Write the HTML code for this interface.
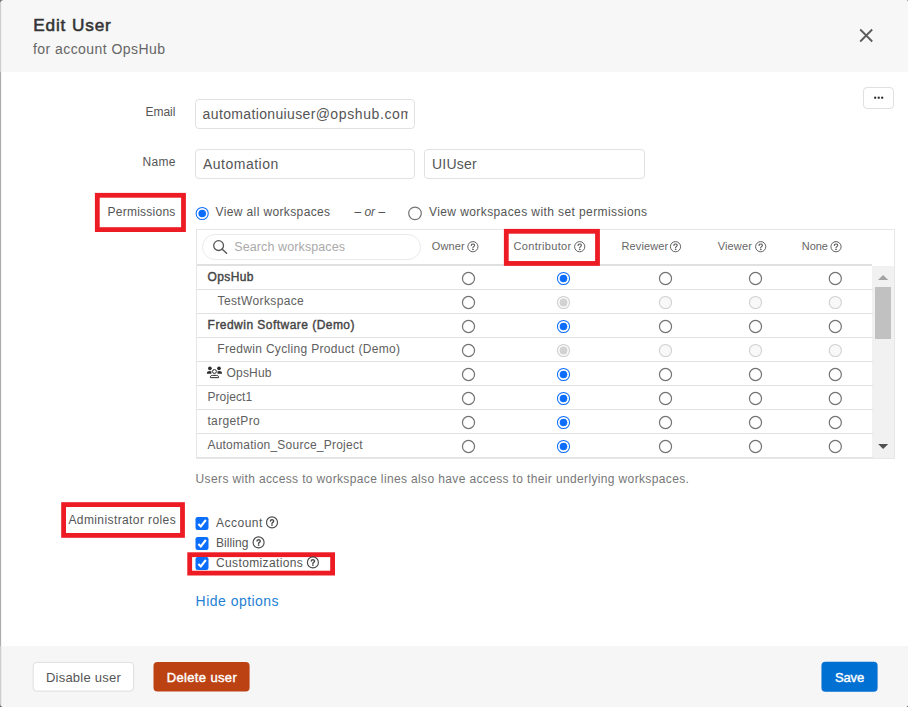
<!DOCTYPE html>
<html lang="en">
<head>
<meta charset="utf-8">
<title>Edit User</title>
<style>
html,body{margin:0;padding:0;}
body{width:908px;height:707px;overflow:hidden;background:#fff;position:relative;font-family:"Liberation Sans",sans-serif;}
.t{position:absolute;white-space:nowrap;line-height:1;}
.abs{position:absolute;box-sizing:border-box;}
#hdr{left:0;top:0;width:908px;height:72px;background:#f7f7f7;}
#ftr{left:0;top:645.5px;width:908px;height:61.5px;background:#f6f6f6;}
.inp{background:#fff;border:1px solid #e1e1e1;border-radius:4px;}
.btn{border-radius:4px;}
#tbl{left:196px;top:229px;width:698.5px;height:229.5px;border:1px solid #e7e7e7;background:#fff;}
.rl{left:197px;width:675.5px;height:1px;background:#e2e2e2;}
svg#ov{position:absolute;left:0;top:0;}
</style>
</head>
<body>
<div class="abs" id="hdr"></div>
<div class="abs" id="ftr"></div>
<div class="abs" style="left:0;top:3px;width:1px;height:69px;background:#cfcfcf;"></div>
<div class="abs" style="left:1px;top:3px;width:1px;height:69px;background:#f0f0f0;"></div>
<div class="abs" style="left:0;top:72px;width:1px;height:573.5px;background:#adadad;"></div>
<div class="abs" style="left:1px;top:72px;width:1px;height:573.5px;background:#f4f4f4;"></div>
<div class="abs" style="left:0;top:645.5px;width:1px;height:59px;background:#cdcdcd;"></div>
<div class="abs" style="left:1px;top:645.5px;width:1px;height:59px;background:#ebebeb;"></div>
<div class="abs inp" style="left:195px;top:99px;width:220px;height:29.5px;"></div>
<div class="abs inp" style="left:195px;top:149px;width:220px;height:29.5px;"></div>
<div class="abs inp" style="left:424px;top:149px;width:220.5px;height:29.5px;"></div>
<div class="abs" style="left:200px;top:104px;width:208.4px;height:20px;overflow:hidden;"><span class="t" id="vemail" style="left:2.6px;top:2.65px;font-size:14px;color:#555;letter-spacing:0.36px;">automationuiuser@<span style="letter-spacing:0.62px;">opshub.com</span></span></div>
<div class="abs inp" style="left:863px;top:87px;width:31px;height:21.5px;border-radius:4px;border-color:#e0e0e0;"></div>
<div class="abs" id="tbl"></div>
<div class="abs" style="left:872.3px;top:266px;width:21.7px;height:191.5px;background:#f1f1f1;"></div>
<div class="abs" style="left:874.8px;top:287px;width:16.6px;height:51.6px;background:#c1c1c1;"></div>
<div class="abs" style="left:197px;top:263.6px;width:675.3px;height:2px;background:#e0e0e0;"></div>
<div class="abs rl" style="top:289.0px;"></div>
<div class="abs rl" style="top:313.0px;"></div>
<div class="abs rl" style="top:337.0px;"></div>
<div class="abs rl" style="top:361.0px;"></div>
<div class="abs rl" style="top:385.0px;"></div>
<div class="abs rl" style="top:409.0px;"></div>
<div class="abs rl" style="top:433.0px;"></div>
<div class="abs rl" style="top:457.0px;"></div>
<div class="abs" style="left:201.5px;top:234px;width:219.5px;height:26px;border:1px solid #eaeaea;border-radius:13px;background:#fff;"></div>
<svg id="ov" width="908" height="707" viewBox="0 0 908 707">
<rect x="33.2" y="662.4" width="100.4" height="28.7" rx="3.6" fill="#fff" stroke="#dedede" stroke-width="1"/>
<rect x="153.5" y="661.9" width="96.1" height="29.7" rx="4" fill="#bd4213"/>
<rect x="821.45" y="661.8" width="56.15" height="30" rx="4" fill="#0070d2"/>
<path d="M0,0 L3.2,0 C1.4,0.6 0.6,1.6 0,3.4 Z" fill="#777"/>
<path d="M908,0 L906.6,0 C907.4,0.3 907.8,0.8 908,1.4 Z" fill="#777"/>
<path d="M0,707 L2.6,707 C1.3,706.4 0.5,705.6 0,704.2 Z" fill="#666"/>
<path d="M908,707 L908,705.6 C907.7,706.4 907.2,706.8 906.4,707 Z" fill="#555"/>
<path d="M860.2,29.5 L872.2,41.5 M872.2,29.5 L860.2,41.5" stroke="#5c5c5c" stroke-width="1.85" fill="none"/>
<rect x="874.2" y="96.7" width="2" height="2" fill="#222"/>
<rect x="877.7" y="96.7" width="2" height="2" fill="#222"/>
<rect x="881.2" y="96.7" width="2" height="2" fill="#222"/>
<rect x="97.30" y="195.30" width="86.20" height="34.30" fill="none" stroke="#ed1c24" stroke-width="4.8"/>
<rect x="506.30" y="231.30" width="91.20" height="32.15" fill="none" stroke="#ed1c24" stroke-width="4.8"/>
<rect x="63.60" y="504.60" width="118.90" height="30.80" fill="none" stroke="#ed1c24" stroke-width="4.8"/>
<rect x="189.70" y="554.70" width="142.90" height="18.40" fill="none" stroke="#ed1c24" stroke-width="4.8"/>
<circle cx="202.2" cy="213.5" r="6.05" fill="#fff" stroke="#0d6efd" stroke-width="1.05"/><circle cx="202.2" cy="213.5" r="3.8" fill="#0d6efd"/>
<circle cx="415.0" cy="213.35" r="6.3" fill="#fff" stroke="#747474" stroke-width="1.2"/>
<circle cx="218.6" cy="245.6" r="4.9" fill="none" stroke="#555" stroke-width="1.3"/><path d="M222.2,249.3 L226.6,253.2" stroke="#555" stroke-width="1.4" stroke-linecap="round"/>
<circle cx="472.90" cy="246.70" r="5.10" fill="none" stroke="#606060" stroke-width="1.0"/><g transform="translate(472.90,246.70) scale(0.938)" fill="none" stroke="#606060" stroke-width="1.23" stroke-linecap="round"><path d="M-1.7,-1.4 C-1.7,-3.4 1.8,-3.4 1.8,-1.4 C1.8,-0.1 0,-0.1 0,1.2"/><circle cx="0" cy="2.9" r="0.35" fill="#606060" stroke-width="0.98"/></g>
<circle cx="579.70" cy="246.70" r="5.10" fill="none" stroke="#606060" stroke-width="1.0"/><g transform="translate(579.70,246.70) scale(0.938)" fill="none" stroke="#606060" stroke-width="1.23" stroke-linecap="round"><path d="M-1.7,-1.4 C-1.7,-3.4 1.8,-3.4 1.8,-1.4 C1.8,-0.1 0,-0.1 0,1.2"/><circle cx="0" cy="2.9" r="0.35" fill="#606060" stroke-width="0.98"/></g>
<circle cx="675.50" cy="246.70" r="5.10" fill="none" stroke="#606060" stroke-width="1.0"/><g transform="translate(675.50,246.70) scale(0.938)" fill="none" stroke="#606060" stroke-width="1.23" stroke-linecap="round"><path d="M-1.7,-1.4 C-1.7,-3.4 1.8,-3.4 1.8,-1.4 C1.8,-0.1 0,-0.1 0,1.2"/><circle cx="0" cy="2.9" r="0.35" fill="#606060" stroke-width="0.98"/></g>
<circle cx="760.70" cy="246.70" r="5.10" fill="none" stroke="#606060" stroke-width="1.0"/><g transform="translate(760.70,246.70) scale(0.938)" fill="none" stroke="#606060" stroke-width="1.23" stroke-linecap="round"><path d="M-1.7,-1.4 C-1.7,-3.4 1.8,-3.4 1.8,-1.4 C1.8,-0.1 0,-0.1 0,1.2"/><circle cx="0" cy="2.9" r="0.35" fill="#606060" stroke-width="0.98"/></g>
<circle cx="836.00" cy="246.70" r="5.10" fill="none" stroke="#606060" stroke-width="1.0"/><g transform="translate(836.00,246.70) scale(0.938)" fill="none" stroke="#606060" stroke-width="1.23" stroke-linecap="round"><path d="M-1.7,-1.4 C-1.7,-3.4 1.8,-3.4 1.8,-1.4 C1.8,-0.1 0,-0.1 0,1.2"/><circle cx="0" cy="2.9" r="0.35" fill="#606060" stroke-width="0.98"/></g>
<circle cx="468.5" cy="278.5" r="6.05" fill="#fff" stroke="#747474" stroke-width="1.2"/>
<circle cx="563.5" cy="278.5" r="6.05" fill="#fff" stroke="#0d6efd" stroke-width="1.05"/><circle cx="563.5" cy="278.5" r="3.8" fill="#0d6efd"/>
<circle cx="665.5" cy="278.5" r="6.05" fill="#fff" stroke="#747474" stroke-width="1.2"/>
<circle cx="755.5" cy="278.5" r="6.05" fill="#fff" stroke="#747474" stroke-width="1.2"/>
<circle cx="835.3" cy="278.5" r="6.05" fill="#fff" stroke="#747474" stroke-width="1.2"/>
<circle cx="468.5" cy="302.5" r="6.05" fill="#fff" stroke="#747474" stroke-width="1.2"/>
<circle cx="563.5" cy="302.5" r="6.05" fill="#fafafa" stroke="#cecece" stroke-width="1.1"/><circle cx="563.5" cy="302.5" r="3.9" fill="#d2d2d2"/>
<circle cx="665.5" cy="302.5" r="6.05" fill="#f8f8f8" stroke="#d0d0d0" stroke-width="1.1"/>
<circle cx="755.5" cy="302.5" r="6.05" fill="#f8f8f8" stroke="#d0d0d0" stroke-width="1.1"/>
<circle cx="835.3" cy="302.5" r="6.05" fill="#f8f8f8" stroke="#d0d0d0" stroke-width="1.1"/>
<circle cx="468.5" cy="326.5" r="6.05" fill="#fff" stroke="#747474" stroke-width="1.2"/>
<circle cx="563.5" cy="326.5" r="6.05" fill="#fff" stroke="#0d6efd" stroke-width="1.05"/><circle cx="563.5" cy="326.5" r="3.8" fill="#0d6efd"/>
<circle cx="665.5" cy="326.5" r="6.05" fill="#fff" stroke="#747474" stroke-width="1.2"/>
<circle cx="755.5" cy="326.5" r="6.05" fill="#fff" stroke="#747474" stroke-width="1.2"/>
<circle cx="835.3" cy="326.5" r="6.05" fill="#fff" stroke="#747474" stroke-width="1.2"/>
<circle cx="468.5" cy="350.5" r="6.05" fill="#fff" stroke="#747474" stroke-width="1.2"/>
<circle cx="563.5" cy="350.5" r="6.05" fill="#fafafa" stroke="#cecece" stroke-width="1.1"/><circle cx="563.5" cy="350.5" r="3.9" fill="#d2d2d2"/>
<circle cx="665.5" cy="350.5" r="6.05" fill="#f8f8f8" stroke="#d0d0d0" stroke-width="1.1"/>
<circle cx="755.5" cy="350.5" r="6.05" fill="#f8f8f8" stroke="#d0d0d0" stroke-width="1.1"/>
<circle cx="835.3" cy="350.5" r="6.05" fill="#f8f8f8" stroke="#d0d0d0" stroke-width="1.1"/>
<circle cx="468.5" cy="374.5" r="6.05" fill="#fff" stroke="#747474" stroke-width="1.2"/>
<circle cx="563.5" cy="374.5" r="6.05" fill="#fff" stroke="#0d6efd" stroke-width="1.05"/><circle cx="563.5" cy="374.5" r="3.8" fill="#0d6efd"/>
<circle cx="665.5" cy="374.5" r="6.05" fill="#fff" stroke="#747474" stroke-width="1.2"/>
<circle cx="755.5" cy="374.5" r="6.05" fill="#fff" stroke="#747474" stroke-width="1.2"/>
<circle cx="835.3" cy="374.5" r="6.05" fill="#fff" stroke="#747474" stroke-width="1.2"/>
<circle cx="468.5" cy="398.5" r="6.05" fill="#fff" stroke="#747474" stroke-width="1.2"/>
<circle cx="563.5" cy="398.5" r="6.05" fill="#fff" stroke="#0d6efd" stroke-width="1.05"/><circle cx="563.5" cy="398.5" r="3.8" fill="#0d6efd"/>
<circle cx="665.5" cy="398.5" r="6.05" fill="#fff" stroke="#747474" stroke-width="1.2"/>
<circle cx="755.5" cy="398.5" r="6.05" fill="#fff" stroke="#747474" stroke-width="1.2"/>
<circle cx="835.3" cy="398.5" r="6.05" fill="#fff" stroke="#747474" stroke-width="1.2"/>
<circle cx="468.5" cy="422.5" r="6.05" fill="#fff" stroke="#747474" stroke-width="1.2"/>
<circle cx="563.5" cy="422.5" r="6.05" fill="#fff" stroke="#0d6efd" stroke-width="1.05"/><circle cx="563.5" cy="422.5" r="3.8" fill="#0d6efd"/>
<circle cx="665.5" cy="422.5" r="6.05" fill="#fff" stroke="#747474" stroke-width="1.2"/>
<circle cx="755.5" cy="422.5" r="6.05" fill="#fff" stroke="#747474" stroke-width="1.2"/>
<circle cx="835.3" cy="422.5" r="6.05" fill="#fff" stroke="#747474" stroke-width="1.2"/>
<circle cx="468.5" cy="446.5" r="6.05" fill="#fff" stroke="#747474" stroke-width="1.2"/>
<circle cx="563.5" cy="446.5" r="6.05" fill="#fff" stroke="#0d6efd" stroke-width="1.05"/><circle cx="563.5" cy="446.5" r="3.8" fill="#0d6efd"/>
<circle cx="665.5" cy="446.5" r="6.05" fill="#fff" stroke="#747474" stroke-width="1.2"/>
<circle cx="755.5" cy="446.5" r="6.05" fill="#fff" stroke="#747474" stroke-width="1.2"/>
<circle cx="835.3" cy="446.5" r="6.05" fill="#fff" stroke="#747474" stroke-width="1.2"/>
<path d="M878,280 L888.2,280 L883.1,274.9 Z" fill="#a3a3a3"/>
<path d="M878.1,443.9 L888.2,443.9 L883.15,449 Z" fill="#505050"/>
<g fill="#2d2d2d" stroke="none"><circle cx="209.9" cy="368.3" r="1.85"/><circle cx="219.0" cy="368.3" r="1.85"/><path d="M206.9,373.8 L206.9,373.1 C206.9,371.6 208.1,370.9 209.6,370.9 C210.4,370.9 211.1,371.2 211.5,371.6 C211.4,372.3 211.4,373.1 211.4,373.8 Z"/><path d="M222.0,373.8 L222.0,373.1 C222.0,371.6 220.8,370.9 219.3,370.9 C218.5,370.9 217.8,371.2 217.4,371.6 C217.5,372.3 217.5,373.1 217.5,373.8 Z"/></g><g fill="none" stroke="#2d2d2d" stroke-width="1.0" stroke-linejoin="round"><circle cx="214.45" cy="371.5" r="1.95"/><path d="M210.4,377.65 L210.4,377.0 C210.4,375.8 211.3,375.4 212.3,375.4 L216.6,375.4 C217.6,375.4 218.5,375.8 218.5,377.0 L218.5,377.65 Z"/></g>
<rect x="195.5" y="517" width="13" height="13" rx="2.2" fill="#0c6efd"/><path d="M198.40,523.90 L200.85,526.40 L205.85,520.00" fill="none" stroke="#fff" stroke-width="2.1" stroke-linecap="butt" stroke-linejoin="miter"/>
<rect x="195.5" y="537" width="13" height="13" rx="2.2" fill="#0c6efd"/><path d="M198.40,543.90 L200.85,546.40 L205.85,540.00" fill="none" stroke="#fff" stroke-width="2.1" stroke-linecap="butt" stroke-linejoin="miter"/>
<rect x="195.5" y="557" width="13" height="13" rx="2.2" fill="#0c6efd"/><path d="M198.40,563.90 L200.85,566.40 L205.85,560.00" fill="none" stroke="#fff" stroke-width="2.1" stroke-linecap="butt" stroke-linejoin="miter"/>
<circle cx="272.00" cy="522.40" r="5.50" fill="none" stroke="#4a4a4a" stroke-width="1.15"/><g transform="translate(272.00,522.40) scale(0.935)" fill="none" stroke="#4a4a4a" stroke-width="1.50" stroke-linecap="round"><path d="M-1.7,-1.4 C-1.7,-3.4 1.8,-3.4 1.8,-1.4 C1.8,-0.1 0,-0.1 0,1.2"/><circle cx="0" cy="2.9" r="0.35" fill="#4a4a4a" stroke-width="1.20"/></g>
<circle cx="258.60" cy="542.40" r="5.50" fill="none" stroke="#4a4a4a" stroke-width="1.15"/><g transform="translate(258.60,542.40) scale(0.935)" fill="none" stroke="#4a4a4a" stroke-width="1.50" stroke-linecap="round"><path d="M-1.7,-1.4 C-1.7,-3.4 1.8,-3.4 1.8,-1.4 C1.8,-0.1 0,-0.1 0,1.2"/><circle cx="0" cy="2.9" r="0.35" fill="#4a4a4a" stroke-width="1.20"/></g>
<circle cx="312.90" cy="562.40" r="5.50" fill="none" stroke="#4a4a4a" stroke-width="1.15"/><g transform="translate(312.90,562.40) scale(0.935)" fill="none" stroke="#4a4a4a" stroke-width="1.50" stroke-linecap="round"><path d="M-1.7,-1.4 C-1.7,-3.4 1.8,-3.4 1.8,-1.4 C1.8,-0.1 0,-0.1 0,1.2"/><circle cx="0" cy="2.9" r="0.35" fill="#4a4a4a" stroke-width="1.20"/></g>
</svg>
<span class="t" id="title" style="left:33.20px;top:17.14px;font-size:17.2px;color:#333;letter-spacing:0.864px;-webkit-text-stroke:0.55px #333;">Edit User</span>
<span class="t" id="sub" style="left:33.00px;top:41.75px;font-size:14px;color:#666;letter-spacing:0.440px;">for account OpsHub</span>
<span class="t" id="lemail" style="left:145.50px;top:106.34px;font-size:12px;color:#555;letter-spacing:-0.029px;">Email</span>
<span class="t" id="lname" style="left:142.40px;top:156.14px;font-size:12px;color:#555;letter-spacing:0.328px;">Name</span>
<span class="t" id="lperm" style="left:107.60px;top:206.04px;font-size:12px;color:#555;letter-spacing:0.234px;">Permissions</span>
<span class="t" id="ladmin" style="left:68.40px;top:513.54px;font-size:12px;color:#555;letter-spacing:0.404px;">Administrator roles</span>
<span class="t" id="vauto" style="left:203.00px;top:156.95px;font-size:14px;color:#555;letter-spacing:0.497px;">Automation</span>
<span class="t" id="vuser" style="left:432.00px;top:156.95px;font-size:14px;color:#555;letter-spacing:0.208px;">UIUser</span>
<span class="t" id="r1" style="left:215.60px;top:205.74px;font-size:12px;color:#555;letter-spacing:0.371px;">View all workspaces</span>
<span class="t" id="or" style="left:354.40px;top:205.74px;font-size:12px;color:#555;letter-spacing:0.003px;font-style:italic;">– or –</span>
<span class="t" id="r2" style="left:429.00px;top:205.74px;font-size:12px;color:#555;letter-spacing:0.407px;">View workspaces with set permissions</span>
<span class="t" id="ph" style="left:234.30px;top:240.62px;font-size:12.5px;color:#aaa;letter-spacing:0.101px;">Search workspaces</span>
<span class="t" id="hown" style="left:431.80px;top:241.19px;font-size:11px;color:#666;letter-spacing:0.098px;">Owner</span>
<span class="t" id="hcon" style="left:513.60px;top:241.19px;font-size:11px;color:#666;letter-spacing:0.308px;">Contributor</span>
<span class="t" id="hrev" style="left:621.40px;top:241.19px;font-size:11px;color:#666;letter-spacing:0.149px;">Reviewer</span>
<span class="t" id="hvie" style="left:717.70px;top:241.19px;font-size:11px;color:#666;letter-spacing:0.152px;">Viewer</span>
<span class="t" id="hnon" style="left:801.80px;top:241.19px;font-size:11px;color:#666;letter-spacing:-0.066px;">None</span>
<span class="t" id="w1" style="left:207.60px;top:270.84px;font-size:12px;color:#444;letter-spacing:0.374px;-webkit-text-stroke:0.4px #444;">OpsHub</span>
<span class="t" id="w2" style="left:217.60px;top:294.84px;font-size:12px;color:#606060;letter-spacing:0.366px;">TestWorkspace</span>
<span class="t" id="w3" style="left:207.60px;top:318.84px;font-size:12px;color:#444;letter-spacing:0.463px;-webkit-text-stroke:0.4px #444;">Fredwin Software (Demo)</span>
<span class="t" id="w4" style="left:217.30px;top:342.84px;font-size:12px;color:#606060;letter-spacing:0.321px;">Fredwin Cycling Product (Demo)</span>
<span class="t" id="w5" style="left:226.60px;top:366.84px;font-size:12px;color:#606060;letter-spacing:0.154px;">OpsHub</span>
<span class="t" id="w6" style="left:207.40px;top:390.84px;font-size:12px;color:#606060;letter-spacing:0.110px;">Project1</span>
<span class="t" id="w7" style="left:207.40px;top:414.84px;font-size:12px;color:#606060;letter-spacing:0.368px;">targetPro</span>
<span class="t" id="w8" style="left:207.40px;top:438.84px;font-size:12px;color:#606060;letter-spacing:0.237px;">Automation_Source_Project</span>
<span class="t" id="help" style="left:195.60px;top:473.44px;font-size:12px;color:#777;letter-spacing:0.362px;">Users with access to workspace lines also have access to their underlying workspaces.</span>
<span class="t" id="cacc" style="left:216.00px;top:516.84px;font-size:12px;color:#555;letter-spacing:0.490px;">Account</span>
<span class="t" id="cbil" style="left:216.00px;top:536.84px;font-size:12px;color:#555;letter-spacing:0.081px;">Billing</span>
<span class="t" id="ccus" style="left:216.00px;top:556.84px;font-size:12px;color:#555;letter-spacing:0.367px;">Customizations</span>
<span class="t" id="hide" style="left:195.60px;top:594.25px;font-size:14px;color:#1f7fd4;letter-spacing:0.470px;">Hide options</span>
<span class="t" id="bdis" style="left:45.90px;top:670.90px;font-size:13px;color:#555;letter-spacing:0.239px;">Disable user</span>
<span class="t" id="bdel" style="left:166.70px;top:670.90px;font-size:13px;color:#fff;letter-spacing:0.362px;-webkit-text-stroke:0.4px #fff;">Delete user</span>
<span class="t" id="bsav" style="left:834.90px;top:670.90px;font-size:13px;color:#fff;letter-spacing:-0.114px;-webkit-text-stroke:0.4px #fff;">Save</span>
</body>
</html>
